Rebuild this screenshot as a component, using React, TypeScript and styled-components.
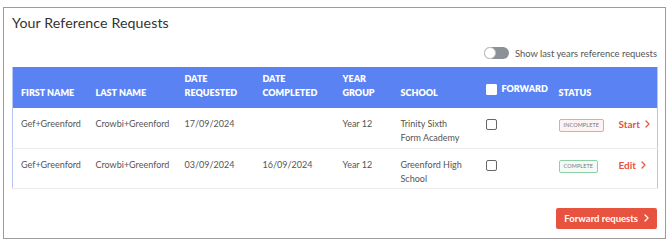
import styled, { createGlobalStyle } from "styled-components";

const Global = createGlobalStyle`
  body {
    margin: 0;
    background: #ffffff;
    font-family: "Lato", "Open Sans", sans-serif;
  }
`;

const Panel = styled.div`
  margin: 7px 0 0 3px;
  width: 663px;
  height: 232px;
  border: 1px solid #9c9c9c;
  padding: 0 8px;
  box-sizing: border-box;
  display: flex;
  flex-direction: column;
`;

const Title = styled.h1`
  margin: 0;
  padding-top: 6px;
  height: 25px;
  font-size: 14.2px;
  font-weight: 400;
  color: #333;
  letter-spacing: 0.1px;
`;

const ToggleRow = styled.div`
  display: flex;
  justify-content: flex-end;
  align-items: center;
  gap: 6px;
  height: 28px;
  font-size: 9.4px;
  color: #555;
`;

const Switch = styled.span`
  position: relative;
  width: 25px;
  height: 12px;
  border-radius: 6px;
  background: #8c9097;

  &::after {
    content: "";
    position: absolute;
    left: 0;
    top: 0;
    width: 12px;
    height: 12px;
    border-radius: 50%;
    background: #fff;
    border: 1px solid #c4c4c4;
    box-sizing: border-box;
  }
`;

const Table = styled.table`
  width: 645px;
  border-collapse: collapse;
  table-layout: fixed;
  border: 1px solid #b7c6f3;
  border-top: none;
`;

const Th = styled.th<{ $w: number; $mid?: boolean }>`
  width: ${(p) => p.$w}px;
  background: #5a82f2;
  color: #fff;
  font-size: 9px;
  font-weight: 800;
  text-align: left;
  vertical-align: ${(p) => (p.$mid ? "top" : "bottom")};
  padding: ${(p) => (p.$mid ? "15px 4px 0 8px" : "0 4px 8px 8px")};
  line-height: 14px;
  height: 41px;
  box-sizing: border-box;
`;

const Td = styled.td<{ $narrow?: boolean }>`
  font-size: 9px;
  color: #555;
  vertical-align: top;
  padding: 9px ${(p) => (p.$narrow ? "12px" : "4px")} 0 8px;
  line-height: 14px;
  height: 40px;
  box-sizing: border-box;
  border-bottom: 1px solid #ececec;
`;

const Check = styled.span<{ $light?: boolean }>`
  display: inline-block;
  width: 9px;
  height: 9px;
  border: 1px solid ${(p) => (p.$light ? "#fff" : "#666")};
  background: ${(p) => (p.$light ? "#fff" : "transparent")};
  border-radius: ${(p) => (p.$light ? "1px" : "2px")};
  vertical-align: middle;
`;

const HeadCheck = styled.span`
  display: inline-flex;
  align-items: center;
  gap: 5px;
`;

const Badge = styled.span<{ $done?: boolean }>`
  display: inline-block;
  margin-top: 2px;
  padding: 0 4px;
  height: 11px;
  line-height: 11px;
  font-size: 5.5px;
  letter-spacing: 0.1px;
  border-radius: 2px;
  color: #777;
  border: 1px solid ${(p) => (p.$done ? "#8dd0a3" : "#e7a3a6")};
  background: ${(p) => (p.$done ? "#f4fbf6" : "#fdf3f3")};
`;

const ActionLink = styled.a`
  display: inline-flex;
  align-items: center;
  gap: 5px;
  color: #e8533f;
  font-weight: 700;
  font-size: 10px;
  text-decoration: none;
`;

const Footer = styled.div`
  display: flex;
  justify-content: flex-end;
  padding-top: 19px;
`;

const Button = styled.button`
  display: flex;
  align-items: center;
  gap: 6px;
  height: 21px;
  padding: 0 8px;
  border: none;
  border-radius: 2px;
  background: #e8533f;
  color: #fff;
  font-family: inherit;
  font-size: 9.5px;
  font-weight: 700;
`;

const Chevron = ({ color }: { color: string }) => (
  <svg width="5" height="8" viewBox="0 0 5 8" fill="none">
    <path d="M1 1l3 3-3 3" stroke={color} strokeWidth="1.3" strokeLinecap="round" strokeLinejoin="round" />
  </svg>
);

const rows = [
  {
    first: "Gef+Greenford",
    last: "Crowbi+Greenford",
    requested: "17/09/2024",
    completed: "",
    year: "Year 12",
    school: "Trinity Sixth Form Academy",
    done: false,
  },
  {
    first: "Gef+Greenford",
    last: "Crowbi+Greenford",
    requested: "03/09/2024",
    completed: "16/09/2024",
    year: "Year 12",
    school: "Greenford High School",
    done: true,
  },
];

export default function App() {
  return (
    <>
      <Global />
      <Panel>
        <Title>Your Reference Requests</Title>
        <ToggleRow>
          <Switch />
          Show last years reference requests
        </ToggleRow>
        <Table>
          <thead>
            <tr>
              <Th $w={75}>FIRST NAME</Th>
              <Th $w={89}>LAST NAME</Th>
              <Th $w={78}>DATE<br />REQUESTED</Th>
              <Th $w={80}>DATE<br />COMPLETED</Th>
              <Th $w={58}>YEAR<br />GROUP</Th>
              <Th $w={85}>SCHOOL</Th>
              <Th $w={73} $mid>
                <HeadCheck>
                  <Check $light />
                  FORWARD
                </HeadCheck>
              </Th>
              <Th $w={60}>STATUS</Th>
              <Th $w={47}></Th>
            </tr>
          </thead>
          <tbody>
            {rows.map((r, i) => (
              <tr key={i}>
                <Td>{r.first}</Td>
                <Td>{r.last}</Td>
                <Td>{r.requested}</Td>
                <Td>{r.completed}</Td>
                <Td>{r.year}</Td>
                <Td $narrow>{r.school}</Td>
                <Td>
                  <Check />
                </Td>
                <Td>
                  <Badge $done={r.done}>{r.done ? "COMPLETE" : "INCOMPLETE"}</Badge>
                </Td>
                <Td>
                  <ActionLink>
                    {r.done ? "Edit" : "Start"}
                    <Chevron color="#e8533f" />
                  </ActionLink>
                </Td>
              </tr>
            ))}
          </tbody>
        </Table>
        <Footer>
          <Button>
            Forward requests
            <Chevron color="#fff" />
          </Button>
        </Footer>
      </Panel>
    </>
  );
}
